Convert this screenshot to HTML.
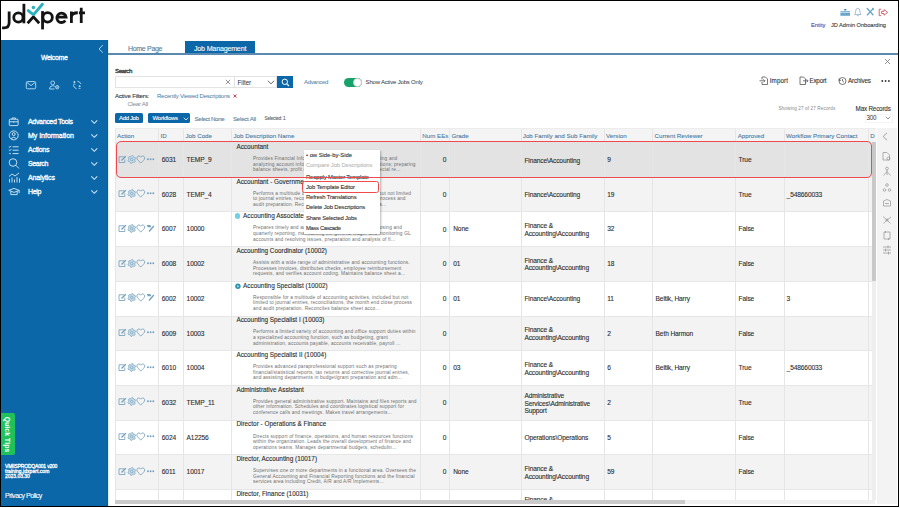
<!DOCTYPE html><html><head><meta charset="utf-8"><style>
*{margin:0;padding:0;box-sizing:border-box}
html,body{width:900px;height:508px;overflow:hidden;background:#fff}
body{position:relative;font-family:"Liberation Sans",sans-serif}
.t{position:absolute;white-space:nowrap}
.r{position:absolute}
.s{-webkit-text-stroke:0.1px currentColor}
.s2{-webkit-text-stroke:0.3px currentColor}
svg{position:absolute;overflow:visible}
</style></head><body>
<div class="r" style="left:0;top:0;width:899px;height:507px;border:1px solid #000;z-index:50"></div>
<svg style="left:0;top:0" width="90" height="40" viewBox="0 0 90 40">
<g fill="none" stroke="#141414" stroke-width="2.8" stroke-linecap="butt">
<path d="M9.15 11.4 V22.6 C9.15 26.6 7.4 27.9 4.2 27.9 H2.1"/>
<circle cx="18.4" cy="17.5" r="4.65"/>
<path d="M23.9 3.8 V23.3"/>
<path d="M27.6 23.2 L33.4 16.9 L39.2 23.2"/>
<circle cx="47.6" cy="17.3" r="4.75"/>
<path d="M42.55 11.1 V29.4"/>
<path d="M56.5 17.2 H66.1 A4.65 4.65 0 1 0 65.3 20.5"/>
<path d="M71.4 23.1 V11.4 M71.4 16.6 Q72 12.75 77.8 12.75"/>
<path d="M81.25 7.8 V23.1 M78.9 12.95 H85"/>
</g>
<path d="M28.3 10.6 Q30.5 12.6 33.6 14.6 L42.4 4.3" fill="none" stroke="#2db0bd" stroke-width="2.9" stroke-linecap="round" stroke-linejoin="round"/>
<circle cx="33.4" cy="7.6" r="1.75" fill="#2db0bd"/>
</svg>
<svg style="left:838px;top:7px" width="52" height="12" viewBox="0 0 52 12">
<rect x="6.1" y="1.9" width="2.3" height="1.6" rx="0.6" fill="#3f86b0"/>
<rect x="2.4" y="4.1" width="9.6" height="1" fill="#7db3d2"/>
<rect x="2.4" y="5.6" width="9.6" height="3.2" fill="#6aa7cb"/>
<path d="M16.6 7.6 Q17.6 6.6 17.6 4.6 Q17.6 1.2 19.8 1.2 Q22 1.2 22 4.6 Q22 6.6 23 7.6 Z M18.9 8.7 H20.7" fill="none" stroke="#86a9bd" stroke-width="0.75"/>
<path d="M29 1.3 L35.4 8.2 M35.6 1.3 L29 8.2" stroke="#6aa6c6" stroke-width="1.3"/>
<path d="M28.6 0.9 L30.6 2.9 M34 0.9 L36.2 2.9" stroke="#6aa6c6" stroke-width="0.9"/>
<path d="M43 2.2 H41.2 V8.6 H43" fill="none" stroke="#d4606a" stroke-width="0.95"/>
<path d="M43.6 4.3 H46 V2.6 L49.6 5.4 L46 8.2 V6.5 H43.6 Z" fill="none" stroke="#d4606a" stroke-width="0.95" stroke-linejoin="round"/>
</svg>
<div class="t s" style="left:811px;top:21.70px;font-size:5.7px;line-height:7.41px;color:#4a46a6;font-weight:normal;letter-spacing:0.029px;">Entity</div>
<div class="t s" style="left:831px;top:21.70px;font-size:5.7px;line-height:7.41px;color:#3a3a3a;font-weight:normal;letter-spacing:-0.038px;">JD Admin Onboarding</div>
<div class="r" style="left:1px;top:40px;width:107px;height:466px;background:#0b67a8;"></div>
<div class="r" style="left:107px;top:40px;width:1px;height:466px;background:#0b5d99;"></div>
<div class="r" style="left:108px;top:40px;width:1px;height:466px;background:#dff0f8;"></div>
<svg style="left:97px;top:44px" width="8" height="10" viewBox="0 0 8 10"><path d="M5.8 1.2 L2 4.9 L5.8 8.6" fill="none" stroke="#c3e2f6" stroke-width="0.9"/></svg>
<div class="t s2" style="left:41px;top:53.78px;font-size:6.8px;line-height:8.84px;color:#fff;font-weight:normal;letter-spacing:-0.256px;">Welcome</div>
<svg style="left:24px;top:79px" width="62" height="12" viewBox="0 0 62 12">
<g fill="none" stroke="#a8d4f0" stroke-width="1">
<rect x="2.3" y="2.6" width="9.4" height="7.2" rx="1"/>
<path d="M2.8 3.4 L7 6.6 L11.2 3.4"/>
<circle cx="28.7" cy="3.9" r="1.9"/>
<path d="M25.5 10 Q25.5 6.8 28.7 6.8 Q30 6.8 30.8 7.3 M25.5 10 H30.5"/>
<circle cx="33.2" cy="8.2" r="1.7"/><circle cx="33.2" cy="8.2" r="0.5"/>
<path d="M53.4 2.2 Q55.8 2.6 57 4.9 M49.3 6.3 Q49.9 8.9 52.6 9.8"/>
</g>
<g fill="#b8def5"><circle cx="50.4" cy="2.9" r="1"/><path d="M48.9 5.4 Q50.4 3.6 51.9 5.4 Z"/>
<circle cx="55.6" cy="7.3" r="1"/><path d="M54.1 9.8 Q55.6 8 57.1 9.8 Z"/></g>
</svg>
<div class="t s2" style="left:28px;top:117.45px;font-size:7px;line-height:9.1px;color:#fff;font-weight:normal;letter-spacing:-0.330px;">Advanced Tools</div>
<svg style="left:90px;top:119px" width="9" height="6" viewBox="0 0 9 6"><path d="M1.3 1.4 L4.3 4.3 L7.3 1.4" fill="none" stroke="#cfe6f5" stroke-width="1.05"/></svg>
<div class="t s2" style="left:28px;top:131.45px;font-size:7px;line-height:9.1px;color:#fff;font-weight:normal;letter-spacing:-0.030px;">My Information</div>
<svg style="left:90px;top:133px" width="9" height="6" viewBox="0 0 9 6"><path d="M1.3 1.4 L4.3 4.3 L7.3 1.4" fill="none" stroke="#cfe6f5" stroke-width="1.05"/></svg>
<div class="t s2" style="left:28px;top:145.45px;font-size:7px;line-height:9.1px;color:#fff;font-weight:normal;letter-spacing:-0.259px;">Actions</div>
<svg style="left:90px;top:147px" width="9" height="6" viewBox="0 0 9 6"><path d="M1.3 1.4 L4.3 4.3 L7.3 1.4" fill="none" stroke="#cfe6f5" stroke-width="1.05"/></svg>
<div class="t s2" style="left:28px;top:159.45px;font-size:7px;line-height:9.1px;color:#fff;font-weight:normal;letter-spacing:-0.356px;">Search</div>
<svg style="left:90px;top:161px" width="9" height="6" viewBox="0 0 9 6"><path d="M1.3 1.4 L4.3 4.3 L7.3 1.4" fill="none" stroke="#cfe6f5" stroke-width="1.05"/></svg>
<div class="t s2" style="left:28px;top:173.45px;font-size:7px;line-height:9.1px;color:#fff;font-weight:normal;letter-spacing:-0.139px;">Analytics</div>
<svg style="left:90px;top:175px" width="9" height="6" viewBox="0 0 9 6"><path d="M1.3 1.4 L4.3 4.3 L7.3 1.4" fill="none" stroke="#cfe6f5" stroke-width="1.05"/></svg>
<div class="t s2" style="left:28px;top:187.45px;font-size:7px;line-height:9.1px;color:#fff;font-weight:normal;letter-spacing:-0.332px;">Help</div>
<svg style="left:90px;top:189px" width="9" height="6" viewBox="0 0 9 6"><path d="M1.3 1.4 L4.3 4.3 L7.3 1.4" fill="none" stroke="#cfe6f5" stroke-width="1.05"/></svg>
<svg style="left:7px;top:114px" width="14" height="86" viewBox="0 0 14 86">
<g fill="none" stroke="#d8ecf8" stroke-width="0.9">
<rect x="2.3" y="5.2" width="8.8" height="6.4" rx="0.9"/><path d="M5 5.2 V4 H8.4 V5.2 M2.3 7.8 H11.1 M6.7 7.4 V8.6"/>
<circle cx="6.7" cy="21.4" r="4.5"/><circle cx="6.7" cy="20.1" r="1.5"/><path d="M3.9 24.6 Q6.7 21.8 9.5 24.6"/>
<path d="M1.8 32.6 L2.8 33.4 L4.2 31.9 M5.6 32.8 H11.6 M1.8 35.9 L2.8 36.7 L4.2 35.2 M5.6 36.2 H11.6 M2.2 39.6 H3.8 M5.6 39.6 H11.6"/>
<circle cx="6" cy="48.5" r="3.8"/><path d="M8.8 51.3 L12 54.5"/>
<path d="M2.5 68.5 V65 M5 68.5 V63.5 M7.5 68.5 V65.5 M10 68.5 V63 M12.5 68.5 V64.5 M2 62.5 L5 60 L8 62 L12 59"/>
<path d="M1.8 76.4 L7 74.4 L12.2 76.4 L7 78.4 Z M3.8 77.4 V80.6 H10.2 V77.4 M12.2 76.4 V79"/>
</g></svg>
<div class="r" style="left:1px;top:413.4px;width:13.8px;height:42px;background:#1fc25a;border-radius:0 2px 2px 0"></div>
<div class="t" style="left:-13.9px;top:429px;width:42px;height:11px;transform:rotate(90deg);font-size:6.9px;line-height:11px;color:#fff;font-weight:bold;text-align:center;letter-spacing:0.05px">Quick Tips</div>
<div class="t s2" style="left:5px;top:464.10px;font-size:5px;line-height:5px;color:#fff;font-weight:normal;letter-spacing:-0.192px;">VMIISPRODQA001 v200</div>
<div class="t s2" style="left:5px;top:469.10px;font-size:5px;line-height:5px;color:#fff;font-weight:normal;letter-spacing:0.035px;">training.jdxpert.com</div>
<div class="t s2" style="left:5px;top:474.10px;font-size:5px;line-height:5px;color:#fff;font-weight:normal;letter-spacing:-0.025px;">2023.03.30</div>
<div class="t s" style="left:5px;top:492.28px;font-size:7.1px;line-height:9.23px;color:#fff;font-weight:normal;letter-spacing:-0.522px;">Privacy Policy</div>
<div class="t s" style="left:128px;top:44.25px;font-size:7px;line-height:9.1px;color:#587a94;font-weight:normal;letter-spacing:-0.308px;">Home Page</div>
<div class="r" style="left:185px;top:41px;width:70px;height:12.5px;background:#0b67a8;"></div>
<div class="t s" style="left:194px;top:44.59px;font-size:7.1px;line-height:9.23px;color:#fff;font-weight:normal;letter-spacing:-0.189px;">Job Management</div>
<div class="r" style="left:108px;top:53px;width:790px;height:1.6px;background:#5a8ab0;"></div>
<svg style="left:884px;top:58px" width="7" height="7" viewBox="0 0 7 7"><path d="M1 1 L6 6 M6 1 L1 6" stroke="#777" stroke-width="0.8"/></svg>
<div class="t s2" style="left:115px;top:67.37px;font-size:6.2px;line-height:8.06px;color:#333;font-weight:normal;letter-spacing:-0.449px;">Search</div>
<div class="r" style="left:115px;top:76px;width:120px;height:12px;border:1px solid #e3e3e3;background:#fff"></div>
<svg style="left:225px;top:79px" width="6" height="6" viewBox="0 0 6 6"><path d="M0.8 0.8 L5.2 5.2 M5.2 0.8 L0.8 5.2" stroke="#666" stroke-width="0.7"/></svg>
<div class="r" style="left:234px;top:76px;width:43px;height:12px;border:1px solid #e3e3e3;background:#fff"></div>
<div class="t" style="left:237.5px;top:78.70px;font-size:6.3px;line-height:8.19px;color:#333;font-weight:normal;letter-spacing:-0.060px;">Filter</div>
<svg style="left:267px;top:80px" width="8" height="5" viewBox="0 0 8 5"><path d="M0.8 0.8 L4 3.8 L7.2 0.8" fill="none" stroke="#444" stroke-width="0.8"/></svg>
<div class="r" style="left:277px;top:76px;width:16px;height:12px;background:#0b67a8;"></div>
<svg style="left:281px;top:78px" width="9" height="9" viewBox="0 0 9 9"><circle cx="3.8" cy="3.8" r="2.7" fill="none" stroke="#fff" stroke-width="1"/><path d="M5.8 5.8 L8 8" stroke="#fff" stroke-width="1.1"/></svg>
<div class="t" style="left:304px;top:79.40px;font-size:6px;line-height:7.8px;color:#4a7aa3;font-weight:normal;letter-spacing:-0.341px;">Advanced</div>
<div class="r" style="left:343.5px;top:77.6px;width:18.6px;height:9.8px;background:#17a26b;border-radius:5px"></div>
<div class="r" style="left:352.5px;top:77.8px;width:9.4px;height:9.4px;border-radius:50%;background:#fff;border:0.6px solid #d0d0d0"></div>
<div class="t" style="left:365.6px;top:79.40px;font-size:6px;line-height:7.8px;color:#333;font-weight:normal;letter-spacing:-0.188px;">Show Active Jobs Only</div>
<svg style="left:758px;top:75px" width="92" height="11" viewBox="0 0 92 11">
<g fill="none" stroke="#555" stroke-width="0.8">
<path d="M4 2 H7.5 L9.5 4 V9.5 H4 V7 M4 4.5 V2"/><path d="M1.5 5.8 H7 M5.5 4.3 L7 5.8 L5.5 7.3"/>
<path d="M42 2 H45.5 L47.5 4 V9.5 H42 Z"/><path d="M45 5.8 H50 M48.6 4.3 L50 5.8 L48.6 7.3"/>
<circle cx="84.5" cy="6" r="3.5"/><path d="M84.5 4 V6 L86 7.2"/><path d="M81 3.5 L81 5.5 L83 5.2"/>
</g></svg>
<div class="t s" style="left:769.7px;top:77.11px;font-size:6.3px;line-height:8.19px;color:#333;font-weight:normal;letter-spacing:0.109px;">Import</div>
<div class="t s" style="left:809.4px;top:77.11px;font-size:6.3px;line-height:8.19px;color:#333;font-weight:normal;letter-spacing:-0.202px;">Export</div>
<div class="t s" style="left:848px;top:77.11px;font-size:6.3px;line-height:8.19px;color:#333;font-weight:normal;letter-spacing:-0.165px;">Archives</div>
<svg style="left:881px;top:79px" width="10" height="4" viewBox="0 0 10 4"><g fill="#333"><circle cx="1.3" cy="2" r="0.9"/><circle cx="4.6" cy="2" r="0.9"/><circle cx="7.9" cy="2" r="0.9"/></g></svg>
<div class="t s" style="left:115px;top:92.17px;font-size:6.2px;line-height:8.06px;color:#333;font-weight:normal;letter-spacing:-0.200px;">Active Filters:</div>
<div class="t" style="left:157px;top:92.70px;font-size:6px;line-height:7.8px;color:#4a7aa3;font-weight:normal;letter-spacing:-0.232px;">Recently Viewed Descriptions</div>
<svg style="left:232.6px;top:94px" width="4" height="4" viewBox="0 0 4 4"><path d="M0.5 0.5 L3.5 3.5 M3.5 0.5 L0.5 3.5" stroke="#d2343c" stroke-width="0.9"/></svg>
<div class="t" style="left:127.4px;top:99.83px;font-size:6.1px;line-height:7.93px;color:#8a8a8a;font-weight:normal;letter-spacing:-0.244px;">Clear All</div>
<div class="t" style="left:778.4px;top:105.61px;font-size:4.6px;line-height:5.98px;color:#888;font-weight:normal;letter-spacing:0.128px;">Showing 27 of 27 Records</div>
<div class="t s" style="left:855.6px;top:104.70px;font-size:6.3px;line-height:8.19px;color:#333;font-weight:normal;letter-spacing:-0.191px;">Max Records</div>
<div class="r" style="left:864.5px;top:113.5px;width:28px;height:9px;border:1px solid #f4f4f4;background:#fff"></div>
<div class="t" style="left:866.5px;top:113.91px;font-size:6.3px;line-height:8.19px;color:#333;font-weight:normal;letter-spacing:-0.306px;">300</div>
<svg style="left:885px;top:116px" width="6" height="4" viewBox="0 0 6 4"><path d="M0.7 0.7 L3 3 L5.3 0.7" fill="none" stroke="#666" stroke-width="0.7"/></svg>
<div class="r" style="left:115px;top:113px;width:28.3px;height:9.8px;background:#0b67a8;border-radius:1.5px"></div>
<div class="t s" style="left:119px;top:115.30px;font-size:6px;line-height:7.8px;color:#fff;font-weight:normal;letter-spacing:-0.353px;">Add Job</div>
<div class="r" style="left:148px;top:113px;width:42px;height:9.8px;background:#0b67a8;border-radius:1.5px"></div>
<div class="t s" style="left:152.5px;top:115.30px;font-size:6px;line-height:7.8px;color:#fff;font-weight:normal;letter-spacing:-0.246px;">Workflows</div>
<svg style="left:183px;top:117px" width="6" height="4" viewBox="0 0 6 4"><path d="M0.7 0.7 L3 3 L5.3 0.7" fill="none" stroke="#fff" stroke-width="0.8"/></svg>
<div class="t s" style="left:194.6px;top:114.87px;font-size:6.2px;line-height:8.06px;color:#61809a;font-weight:normal;letter-spacing:-0.358px;">Select None</div>
<div class="t s" style="left:233px;top:114.87px;font-size:6.2px;line-height:8.06px;color:#61809a;font-weight:normal;letter-spacing:-0.272px;">Select All</div>
<div class="t s" style="left:264.6px;top:116.34px;font-size:4.7px;line-height:6.11px;color:#666;font-weight:normal;letter-spacing:-0.232px;">Selected: 1</div>
<div class="r" style="left:115px;top:128px;width:760.5px;height:14px;background:#f4f4f4;"></div>
<div class="t s" style="left:117px;top:131.57px;font-size:6.2px;line-height:8.06px;color:#4c7ca5;font-weight:normal;">Action</div>
<div class="t s" style="left:160.5px;top:131.57px;font-size:6.2px;line-height:8.06px;color:#4c7ca5;font-weight:normal;">ID</div>
<div class="t s" style="left:185.5px;top:131.57px;font-size:6.2px;line-height:8.06px;color:#4c7ca5;font-weight:normal;">Job Code</div>
<div class="t s" style="left:233.5px;top:131.57px;font-size:6.2px;line-height:8.06px;color:#4c7ca5;font-weight:normal;">Job Description Name</div>
<div class="t s" style="left:422.3px;top:131.57px;font-size:6.2px;line-height:8.06px;color:#4c7ca5;font-weight:normal;">Num EEs</div>
<div class="t s" style="left:451.4px;top:131.57px;font-size:6.2px;line-height:8.06px;color:#4c7ca5;font-weight:normal;">Grade</div>
<div class="t s" style="left:522.8px;top:131.57px;font-size:6.2px;line-height:8.06px;color:#4c7ca5;font-weight:normal;">Job Family and Sub Family</div>
<div class="t s" style="left:606px;top:131.57px;font-size:6.2px;line-height:8.06px;color:#4c7ca5;font-weight:normal;">Version</div>
<div class="t s" style="left:654.5px;top:131.57px;font-size:6.2px;line-height:8.06px;color:#4c7ca5;font-weight:normal;">Current Reviewer</div>
<div class="t s" style="left:737.7px;top:131.57px;font-size:6.2px;line-height:8.06px;color:#4c7ca5;font-weight:normal;">Approved</div>
<div class="t s" style="left:786px;top:131.57px;font-size:6.2px;line-height:8.06px;color:#4c7ca5;font-weight:normal;">Workflow Primary Contact</div>
<div class="t s" style="left:870.3px;top:131.57px;font-size:6.2px;line-height:8.06px;color:#4c7ca5;font-weight:normal;">D</div>
<div class="r" style="left:115px;top:142.00px;width:760.5px;height:34.70px;background:#e3e3e3;"></div>
<div class="r" style="left:115px;top:176.70px;width:760.5px;height:34.70px;background:#f3f3f3;"></div>
<div class="r" style="left:115px;top:176.70px;width:760.5px;height:1px;background:#e6e6e6;"></div>
<div class="r" style="left:115px;top:211.40px;width:760.5px;height:34.70px;background:#fff;"></div>
<div class="r" style="left:115px;top:211.40px;width:760.5px;height:1px;background:#e6e6e6;"></div>
<div class="r" style="left:115px;top:246.10px;width:760.5px;height:34.70px;background:#f3f3f3;"></div>
<div class="r" style="left:115px;top:246.10px;width:760.5px;height:1px;background:#e6e6e6;"></div>
<div class="r" style="left:115px;top:280.80px;width:760.5px;height:34.70px;background:#fff;"></div>
<div class="r" style="left:115px;top:280.80px;width:760.5px;height:1px;background:#e6e6e6;"></div>
<div class="r" style="left:115px;top:315.50px;width:760.5px;height:34.70px;background:#f3f3f3;"></div>
<div class="r" style="left:115px;top:315.50px;width:760.5px;height:1px;background:#e6e6e6;"></div>
<div class="r" style="left:115px;top:350.20px;width:760.5px;height:34.70px;background:#fff;"></div>
<div class="r" style="left:115px;top:350.20px;width:760.5px;height:1px;background:#e6e6e6;"></div>
<div class="r" style="left:115px;top:384.90px;width:760.5px;height:34.70px;background:#f3f3f3;"></div>
<div class="r" style="left:115px;top:384.90px;width:760.5px;height:1px;background:#e6e6e6;"></div>
<div class="r" style="left:115px;top:419.60px;width:760.5px;height:34.70px;background:#fff;"></div>
<div class="r" style="left:115px;top:419.60px;width:760.5px;height:1px;background:#e6e6e6;"></div>
<div class="r" style="left:115px;top:454.30px;width:760.5px;height:34.70px;background:#f3f3f3;"></div>
<div class="r" style="left:115px;top:454.30px;width:760.5px;height:1px;background:#e6e6e6;"></div>
<div class="r" style="left:115px;top:489.00px;width:760.5px;height:11.00px;background:#fff;"></div>
<div class="r" style="left:115px;top:489.00px;width:760.5px;height:1px;background:#e6e6e6;"></div>
<div class="r" style="left:158px;top:128px;width:1px;height:372px;background:#e6e6e6;"></div>
<div class="r" style="left:183px;top:128px;width:1px;height:372px;background:#e6e6e6;"></div>
<div class="r" style="left:231px;top:128px;width:1px;height:372px;background:#e6e6e6;"></div>
<div class="r" style="left:420px;top:128px;width:1px;height:372px;background:#e6e6e6;"></div>
<div class="r" style="left:449px;top:128px;width:1px;height:372px;background:#e6e6e6;"></div>
<div class="r" style="left:521px;top:128px;width:1px;height:372px;background:#e6e6e6;"></div>
<div class="r" style="left:604px;top:128px;width:1px;height:372px;background:#e6e6e6;"></div>
<div class="r" style="left:652px;top:128px;width:1px;height:372px;background:#e6e6e6;"></div>
<div class="r" style="left:735px;top:128px;width:1px;height:372px;background:#e6e6e6;"></div>
<div class="r" style="left:784px;top:128px;width:1px;height:372px;background:#e6e6e6;"></div>
<div class="r" style="left:868px;top:128px;width:1px;height:372px;background:#e6e6e6;"></div>
<div class="r" style="left:115px;top:128px;width:1px;height:372px;background:#e6e6e6;"></div>
<div class="r" style="left:115px;top:128px;width:760.5px;height:1px;background:#ececec;"></div>
<svg style="left:118.3px;top:154.50px" width="38" height="9" viewBox="0 0 38 9"><g fill="none" stroke="#76a1bc" stroke-width="0.85"><path d="M6.5 1.8 H1 V7.5 H6.8 V4.5"/><path d="M3.5 5.5 L7.8 1.2" stroke-width="1.3"/><path d="M13.80 0.60 L14.81 0.73 L15.35 1.82 L15.99 2.31 L17.18 2.55 L17.57 3.49 L16.90 4.50 L16.79 5.30 L17.18 6.45 L16.56 7.26 L15.35 7.18 L14.60 7.49 L13.80 8.40 L12.79 8.27 L12.25 7.18 L11.61 6.69 L10.42 6.45 L10.03 5.51 L10.70 4.50 L10.81 3.70 L10.42 2.55 L11.04 1.74 L12.25 1.82 L13.00 1.51 Z" fill="#c9dde8" stroke-width="0.75" stroke-linejoin="round"/><circle cx="13.8" cy="4.5" r="1.3" stroke-width="0.7"/><path d="M22.8 7.9 C20.5 6 18.9 4.6 18.9 3 C18.9 1.8 19.8 1 20.9 1 C21.8 1 22.4 1.5 22.8 2.2 C23.2 1.5 23.8 1 24.7 1 C25.8 1 26.7 1.8 26.7 3 C26.7 4.6 25.1 6 22.8 7.9 Z"/></g><g fill="#76a1bc"><circle cx="29.9" cy="4.3" r="0.95"/><circle cx="32.6" cy="4.3" r="0.95"/><circle cx="35.3" cy="4.3" r="0.95"/></g></svg>
<div class="t s" style="left:161.8px;top:156.01px;font-size:6.6px;line-height:8.58px;color:#2b2b2b;font-weight:normal;letter-spacing:-0.12px;">6031</div>
<div class="t s" style="left:186.6px;top:156.01px;font-size:6.6px;line-height:8.58px;color:#2b2b2b;font-weight:normal;letter-spacing:-0.12px;">TEMP_9</div>
<div class="t s" style="left:236.4px;top:142.84px;font-size:6.4px;line-height:8.32px;color:#2b2b2b;font-weight:normal;">Accountant</div>
<div class="t" style="left:253px;top:155.90px;font-size:4.8px;line-height:5.6px;color:#6f6f6f;font-weight:normal;letter-spacing:0.159px;">Provides Financial Information by compiling and controlling and</div>
<div class="t" style="left:253px;top:161.50px;font-size:4.8px;line-height:5.6px;color:#6f6f6f;font-weight:normal;letter-spacing:0.159px;">analyzing account information and documenting transactions; preparing</div>
<div class="t" style="left:253px;top:167.10px;font-size:4.8px;line-height:5.6px;color:#6f6f6f;font-weight:normal;letter-spacing:0.159px;">balance sheets, profit and loss statements and other special re...</div>
<div class="t s" style="left:420px;width:26.4px;text-align:right;top:156.10px;font-size:6.6px;line-height:8.4px;color:#2b2b2b">0</div>
<div class="t s" style="left:524.4px;top:156.60px;font-size:6.6px;line-height:7.4px;color:#2b2b2b;font-weight:normal;letter-spacing:-0.12px;">Finance\Accounting</div>
<div class="t s" style="left:607.3px;top:156.01px;font-size:6.6px;line-height:8.58px;color:#2b2b2b;font-weight:normal;letter-spacing:-0.12px;">9</div>
<div class="t s" style="left:738.6px;top:156.01px;font-size:6.6px;line-height:8.58px;color:#2b2b2b;font-weight:normal;letter-spacing:-0.12px;">True</div>
<svg style="left:118.3px;top:189.20px" width="38" height="9" viewBox="0 0 38 9"><g fill="none" stroke="#76a1bc" stroke-width="0.85"><path d="M6.5 1.8 H1 V7.5 H6.8 V4.5"/><path d="M3.5 5.5 L7.8 1.2" stroke-width="1.3"/><path d="M13.80 0.60 L14.81 0.73 L15.35 1.82 L15.99 2.31 L17.18 2.55 L17.57 3.49 L16.90 4.50 L16.79 5.30 L17.18 6.45 L16.56 7.26 L15.35 7.18 L14.60 7.49 L13.80 8.40 L12.79 8.27 L12.25 7.18 L11.61 6.69 L10.42 6.45 L10.03 5.51 L10.70 4.50 L10.81 3.70 L10.42 2.55 L11.04 1.74 L12.25 1.82 L13.00 1.51 Z" fill="#c9dde8" stroke-width="0.75" stroke-linejoin="round"/><circle cx="13.8" cy="4.5" r="1.3" stroke-width="0.7"/><path d="M22.8 7.9 C20.5 6 18.9 4.6 18.9 3 C18.9 1.8 19.8 1 20.9 1 C21.8 1 22.4 1.5 22.8 2.2 C23.2 1.5 23.8 1 24.7 1 C25.8 1 26.7 1.8 26.7 3 C26.7 4.6 25.1 6 22.8 7.9 Z"/></g><g fill="#76a1bc"><circle cx="29.9" cy="4.3" r="0.95"/><circle cx="32.6" cy="4.3" r="0.95"/><circle cx="35.3" cy="4.3" r="0.95"/></g></svg>
<div class="t s" style="left:161.8px;top:190.71px;font-size:6.6px;line-height:8.58px;color:#2b2b2b;font-weight:normal;letter-spacing:-0.12px;">6028</div>
<div class="t s" style="left:186.6px;top:190.71px;font-size:6.6px;line-height:8.58px;color:#2b2b2b;font-weight:normal;letter-spacing:-0.12px;">TEMP_4</div>
<div class="t s" style="left:236.4px;top:177.54px;font-size:6.4px;line-height:8.32px;color:#2b2b2b;font-weight:normal;">Accountant - Government</div>
<div class="t" style="left:253px;top:190.60px;font-size:4.8px;line-height:5.6px;color:#6f6f6f;font-weight:normal;letter-spacing:0.159px;">Performs a multitude of accounting activities, including but not limited</div>
<div class="t" style="left:253px;top:196.20px;font-size:4.8px;line-height:5.6px;color:#6f6f6f;font-weight:normal;letter-spacing:0.159px;">to journal entries, reconciliations, the month end close process and</div>
<div class="t" style="left:253px;top:201.80px;font-size:4.8px;line-height:5.6px;color:#6f6f6f;font-weight:normal;letter-spacing:0.159px;">audit preparation.  Reconciles balance sheet accounts as...</div>
<div class="t s" style="left:420px;width:26.4px;text-align:right;top:190.80px;font-size:6.6px;line-height:8.4px;color:#2b2b2b">0</div>
<div class="t s" style="left:524.4px;top:191.30px;font-size:6.6px;line-height:7.4px;color:#2b2b2b;font-weight:normal;letter-spacing:-0.12px;">Finance\Accounting</div>
<div class="t s" style="left:607.3px;top:190.71px;font-size:6.6px;line-height:8.58px;color:#2b2b2b;font-weight:normal;letter-spacing:-0.12px;">19</div>
<div class="t s" style="left:738.6px;top:190.71px;font-size:6.6px;line-height:8.58px;color:#2b2b2b;font-weight:normal;letter-spacing:-0.12px;">True</div>
<div class="t s" style="left:786.6px;top:190.71px;font-size:6.6px;line-height:8.58px;color:#2b2b2b;font-weight:normal;letter-spacing:-0.12px;">_548660033</div>
<svg style="left:118.3px;top:223.90px" width="38" height="9" viewBox="0 0 38 9"><g fill="none" stroke="#76a1bc" stroke-width="0.85"><path d="M6.5 1.8 H1 V7.5 H6.8 V4.5"/><path d="M3.5 5.5 L7.8 1.2" stroke-width="1.3"/><path d="M13.80 0.60 L14.81 0.73 L15.35 1.82 L15.99 2.31 L17.18 2.55 L17.57 3.49 L16.90 4.50 L16.79 5.30 L17.18 6.45 L16.56 7.26 L15.35 7.18 L14.60 7.49 L13.80 8.40 L12.79 8.27 L12.25 7.18 L11.61 6.69 L10.42 6.45 L10.03 5.51 L10.70 4.50 L10.81 3.70 L10.42 2.55 L11.04 1.74 L12.25 1.82 L13.00 1.51 Z" fill="#c9dde8" stroke-width="0.75" stroke-linejoin="round"/><circle cx="13.8" cy="4.5" r="1.3" stroke-width="0.7"/><path d="M22.8 7.9 C20.5 6 18.9 4.6 18.9 3 C18.9 1.8 19.8 1 20.9 1 C21.8 1 22.4 1.5 22.8 2.2 C23.2 1.5 23.8 1 24.7 1 C25.8 1 26.7 1.8 26.7 3 C26.7 4.6 25.1 6 22.8 7.9 Z"/></g><g fill="none" stroke="#76a1bc" stroke-width="1.1"><path d="M29 1.5 H32.5 M29.5 2.6 H33"/><path d="M35.8 2 L31 7.5" stroke-width="1.3"/></g></svg>
<div class="t s" style="left:161.8px;top:225.41px;font-size:6.6px;line-height:8.58px;color:#2b2b2b;font-weight:normal;letter-spacing:-0.12px;">6007</div>
<div class="t s" style="left:186.6px;top:225.41px;font-size:6.6px;line-height:8.58px;color:#2b2b2b;font-weight:normal;letter-spacing:-0.12px;">10000</div>
<div class="r" style="left:234.7px;top:213.20px;width:5.8px;height:5.8px;border-radius:50%;background:#72cfe6"></div>
<div class="t s" style="left:243.1px;top:212.24px;font-size:6.4px;line-height:8.32px;color:#2b2b2b;font-weight:normal;">Accounting Associate</div>
<div class="t" style="left:253px;top:225.30px;font-size:4.8px;line-height:5.6px;color:#6f6f6f;font-weight:normal;letter-spacing:0.159px;">Prepares timely and accurate financial statements for closing and</div>
<div class="t" style="left:253px;top:230.90px;font-size:4.8px;line-height:5.6px;color:#6f6f6f;font-weight:normal;letter-spacing:0.159px;">quarterly reporting, maintaining the general ledger and monitoring GL</div>
<div class="t" style="left:253px;top:236.50px;font-size:4.8px;line-height:5.6px;color:#6f6f6f;font-weight:normal;letter-spacing:0.159px;">accounts and resolving issues, preparation and analysis of fi...</div>
<div class="t s" style="left:420px;width:26.4px;text-align:right;top:225.50px;font-size:6.6px;line-height:8.4px;color:#2b2b2b">0</div>
<div class="t s" style="left:453.2px;top:225.41px;font-size:6.6px;line-height:8.58px;color:#2b2b2b;font-weight:normal;letter-spacing:-0.12px;">None</div>
<div class="t s" style="left:524.4px;top:222.30px;font-size:6.6px;line-height:7.4px;color:#2b2b2b;font-weight:normal;letter-spacing:-0.12px;">Finance &</div>
<div class="t s" style="left:524.4px;top:229.70px;font-size:6.6px;line-height:7.4px;color:#2b2b2b;font-weight:normal;letter-spacing:-0.12px;">Accounting\Accounting</div>
<div class="t s" style="left:607.3px;top:225.41px;font-size:6.6px;line-height:8.58px;color:#2b2b2b;font-weight:normal;letter-spacing:-0.12px;">32</div>
<div class="t s" style="left:738.6px;top:225.41px;font-size:6.6px;line-height:8.58px;color:#2b2b2b;font-weight:normal;letter-spacing:-0.12px;">False</div>
<svg style="left:118.3px;top:258.60px" width="38" height="9" viewBox="0 0 38 9"><g fill="none" stroke="#76a1bc" stroke-width="0.85"><path d="M6.5 1.8 H1 V7.5 H6.8 V4.5"/><path d="M3.5 5.5 L7.8 1.2" stroke-width="1.3"/><path d="M13.80 0.60 L14.81 0.73 L15.35 1.82 L15.99 2.31 L17.18 2.55 L17.57 3.49 L16.90 4.50 L16.79 5.30 L17.18 6.45 L16.56 7.26 L15.35 7.18 L14.60 7.49 L13.80 8.40 L12.79 8.27 L12.25 7.18 L11.61 6.69 L10.42 6.45 L10.03 5.51 L10.70 4.50 L10.81 3.70 L10.42 2.55 L11.04 1.74 L12.25 1.82 L13.00 1.51 Z" fill="#c9dde8" stroke-width="0.75" stroke-linejoin="round"/><circle cx="13.8" cy="4.5" r="1.3" stroke-width="0.7"/><path d="M22.8 7.9 C20.5 6 18.9 4.6 18.9 3 C18.9 1.8 19.8 1 20.9 1 C21.8 1 22.4 1.5 22.8 2.2 C23.2 1.5 23.8 1 24.7 1 C25.8 1 26.7 1.8 26.7 3 C26.7 4.6 25.1 6 22.8 7.9 Z"/></g><g fill="#76a1bc"><circle cx="29.9" cy="4.3" r="0.95"/><circle cx="32.6" cy="4.3" r="0.95"/><circle cx="35.3" cy="4.3" r="0.95"/></g></svg>
<div class="t s" style="left:161.8px;top:260.11px;font-size:6.6px;line-height:8.58px;color:#2b2b2b;font-weight:normal;letter-spacing:-0.12px;">6008</div>
<div class="t s" style="left:186.6px;top:260.11px;font-size:6.6px;line-height:8.58px;color:#2b2b2b;font-weight:normal;letter-spacing:-0.12px;">10002</div>
<div class="t s" style="left:236.4px;top:246.94px;font-size:6.4px;line-height:8.32px;color:#2b2b2b;font-weight:normal;">Accounting Coordinator (10002)</div>
<div class="t" style="left:253px;top:260.00px;font-size:4.8px;line-height:5.6px;color:#6f6f6f;font-weight:normal;letter-spacing:0.159px;">Assists with a wide range of administrative and accounting functions.</div>
<div class="t" style="left:253px;top:265.60px;font-size:4.8px;line-height:5.6px;color:#6f6f6f;font-weight:normal;letter-spacing:0.159px;">Processes invoices, distributes checks, employee reimbursement</div>
<div class="t" style="left:253px;top:271.20px;font-size:4.8px;line-height:5.6px;color:#6f6f6f;font-weight:normal;letter-spacing:0.159px;">requests, and verifies account coding. Maintains balance sheet a...</div>
<div class="t s" style="left:420px;width:26.4px;text-align:right;top:260.20px;font-size:6.6px;line-height:8.4px;color:#2b2b2b">0</div>
<div class="t s" style="left:453.2px;top:260.11px;font-size:6.6px;line-height:8.58px;color:#2b2b2b;font-weight:normal;letter-spacing:-0.12px;">01</div>
<div class="t s" style="left:524.4px;top:257.00px;font-size:6.6px;line-height:7.4px;color:#2b2b2b;font-weight:normal;letter-spacing:-0.12px;">Finance &</div>
<div class="t s" style="left:524.4px;top:264.40px;font-size:6.6px;line-height:7.4px;color:#2b2b2b;font-weight:normal;letter-spacing:-0.12px;">Accounting\Accounting</div>
<div class="t s" style="left:607.3px;top:260.11px;font-size:6.6px;line-height:8.58px;color:#2b2b2b;font-weight:normal;letter-spacing:-0.12px;">18</div>
<div class="t s" style="left:738.6px;top:260.11px;font-size:6.6px;line-height:8.58px;color:#2b2b2b;font-weight:normal;letter-spacing:-0.12px;">False</div>
<svg style="left:118.3px;top:293.30px" width="38" height="9" viewBox="0 0 38 9"><g fill="none" stroke="#76a1bc" stroke-width="0.85"><path d="M6.5 1.8 H1 V7.5 H6.8 V4.5"/><path d="M3.5 5.5 L7.8 1.2" stroke-width="1.3"/><path d="M13.80 0.60 L14.81 0.73 L15.35 1.82 L15.99 2.31 L17.18 2.55 L17.57 3.49 L16.90 4.50 L16.79 5.30 L17.18 6.45 L16.56 7.26 L15.35 7.18 L14.60 7.49 L13.80 8.40 L12.79 8.27 L12.25 7.18 L11.61 6.69 L10.42 6.45 L10.03 5.51 L10.70 4.50 L10.81 3.70 L10.42 2.55 L11.04 1.74 L12.25 1.82 L13.00 1.51 Z" fill="#c9dde8" stroke-width="0.75" stroke-linejoin="round"/><circle cx="13.8" cy="4.5" r="1.3" stroke-width="0.7"/><path d="M22.8 7.9 C20.5 6 18.9 4.6 18.9 3 C18.9 1.8 19.8 1 20.9 1 C21.8 1 22.4 1.5 22.8 2.2 C23.2 1.5 23.8 1 24.7 1 C25.8 1 26.7 1.8 26.7 3 C26.7 4.6 25.1 6 22.8 7.9 Z"/></g><g fill="none" stroke="#76a1bc" stroke-width="1.1"><path d="M29 1.5 H32.5 M29.5 2.6 H33"/><path d="M35.8 2 L31 7.5" stroke-width="1.3"/></g></svg>
<div class="t s" style="left:161.8px;top:294.81px;font-size:6.6px;line-height:8.58px;color:#2b2b2b;font-weight:normal;letter-spacing:-0.12px;">6002</div>
<div class="t s" style="left:186.6px;top:294.81px;font-size:6.6px;line-height:8.58px;color:#2b2b2b;font-weight:normal;letter-spacing:-0.12px;">10002</div>
<svg style="left:234.6px;top:282.70px" width="6" height="6" viewBox="0 0 6 6"><circle cx="2.9" cy="3.2" r="2.7" fill="#2f95ae"/><path d="M2.2 1.9 L4.3 3.2 L2.2 4.5 Z" fill="#a8e6f4"/></svg>
<div class="t s" style="left:243.1px;top:281.64px;font-size:6.4px;line-height:8.32px;color:#2b2b2b;font-weight:normal;">Accounting Specialist (10002)</div>
<div class="t" style="left:253px;top:294.70px;font-size:4.8px;line-height:5.6px;color:#6f6f6f;font-weight:normal;letter-spacing:0.159px;">Responsible for a multitude of accounting activities, included but not</div>
<div class="t" style="left:253px;top:300.30px;font-size:4.8px;line-height:5.6px;color:#6f6f6f;font-weight:normal;letter-spacing:0.159px;">limited to journal entries, reconciliations, the month end close process</div>
<div class="t" style="left:253px;top:305.90px;font-size:4.8px;line-height:5.6px;color:#6f6f6f;font-weight:normal;letter-spacing:0.159px;">and audit preparation.  Reconciles balance sheet acco...</div>
<div class="t s" style="left:420px;width:26.4px;text-align:right;top:294.90px;font-size:6.6px;line-height:8.4px;color:#2b2b2b">0</div>
<div class="t s" style="left:453.2px;top:294.81px;font-size:6.6px;line-height:8.58px;color:#2b2b2b;font-weight:normal;letter-spacing:-0.12px;">01</div>
<div class="t s" style="left:524.4px;top:295.40px;font-size:6.6px;line-height:7.4px;color:#2b2b2b;font-weight:normal;letter-spacing:-0.12px;">Finance\Accounting</div>
<div class="t s" style="left:607.3px;top:294.81px;font-size:6.6px;line-height:8.58px;color:#2b2b2b;font-weight:normal;letter-spacing:-0.12px;">11</div>
<div class="t s" style="left:655.6px;top:294.81px;font-size:6.6px;line-height:8.58px;color:#2b2b2b;font-weight:normal;letter-spacing:-0.12px;">Beltik, Harry</div>
<div class="t s" style="left:738.6px;top:294.81px;font-size:6.6px;line-height:8.58px;color:#2b2b2b;font-weight:normal;letter-spacing:-0.12px;">False</div>
<div class="t s" style="left:786.6px;top:294.81px;font-size:6.6px;line-height:8.58px;color:#2b2b2b;font-weight:normal;letter-spacing:-0.12px;">3</div>
<svg style="left:118.3px;top:328.00px" width="38" height="9" viewBox="0 0 38 9"><g fill="none" stroke="#76a1bc" stroke-width="0.85"><path d="M6.5 1.8 H1 V7.5 H6.8 V4.5"/><path d="M3.5 5.5 L7.8 1.2" stroke-width="1.3"/><path d="M13.80 0.60 L14.81 0.73 L15.35 1.82 L15.99 2.31 L17.18 2.55 L17.57 3.49 L16.90 4.50 L16.79 5.30 L17.18 6.45 L16.56 7.26 L15.35 7.18 L14.60 7.49 L13.80 8.40 L12.79 8.27 L12.25 7.18 L11.61 6.69 L10.42 6.45 L10.03 5.51 L10.70 4.50 L10.81 3.70 L10.42 2.55 L11.04 1.74 L12.25 1.82 L13.00 1.51 Z" fill="#c9dde8" stroke-width="0.75" stroke-linejoin="round"/><circle cx="13.8" cy="4.5" r="1.3" stroke-width="0.7"/><path d="M22.8 7.9 C20.5 6 18.9 4.6 18.9 3 C18.9 1.8 19.8 1 20.9 1 C21.8 1 22.4 1.5 22.8 2.2 C23.2 1.5 23.8 1 24.7 1 C25.8 1 26.7 1.8 26.7 3 C26.7 4.6 25.1 6 22.8 7.9 Z"/></g><g fill="#76a1bc"><circle cx="29.9" cy="4.3" r="0.95"/><circle cx="32.6" cy="4.3" r="0.95"/><circle cx="35.3" cy="4.3" r="0.95"/></g></svg>
<div class="t s" style="left:161.8px;top:329.51px;font-size:6.6px;line-height:8.58px;color:#2b2b2b;font-weight:normal;letter-spacing:-0.12px;">6009</div>
<div class="t s" style="left:186.6px;top:329.51px;font-size:6.6px;line-height:8.58px;color:#2b2b2b;font-weight:normal;letter-spacing:-0.12px;">10003</div>
<div class="t s" style="left:236.4px;top:316.34px;font-size:6.4px;line-height:8.32px;color:#2b2b2b;font-weight:normal;">Accounting Specialist I (10003)</div>
<div class="t" style="left:253px;top:329.40px;font-size:4.8px;line-height:5.6px;color:#6f6f6f;font-weight:normal;letter-spacing:0.159px;">Performs a limited variety of accounting and office support duties within</div>
<div class="t" style="left:253px;top:335.00px;font-size:4.8px;line-height:5.6px;color:#6f6f6f;font-weight:normal;letter-spacing:0.159px;">a specialized accounting function, such as budgeting, grant</div>
<div class="t" style="left:253px;top:340.60px;font-size:4.8px;line-height:5.6px;color:#6f6f6f;font-weight:normal;letter-spacing:0.159px;">administration, accounts payable, accounts receivable, payroll ...</div>
<div class="t s" style="left:420px;width:26.4px;text-align:right;top:329.60px;font-size:6.6px;line-height:8.4px;color:#2b2b2b">0</div>
<div class="t s" style="left:524.4px;top:326.40px;font-size:6.6px;line-height:7.4px;color:#2b2b2b;font-weight:normal;letter-spacing:-0.12px;">Finance &</div>
<div class="t s" style="left:524.4px;top:333.80px;font-size:6.6px;line-height:7.4px;color:#2b2b2b;font-weight:normal;letter-spacing:-0.12px;">Accounting\Accounting</div>
<div class="t s" style="left:607.3px;top:329.51px;font-size:6.6px;line-height:8.58px;color:#2b2b2b;font-weight:normal;letter-spacing:-0.12px;">2</div>
<div class="t s" style="left:655.6px;top:329.51px;font-size:6.6px;line-height:8.58px;color:#2b2b2b;font-weight:normal;letter-spacing:-0.12px;">Beth Harmon</div>
<div class="t s" style="left:738.6px;top:329.51px;font-size:6.6px;line-height:8.58px;color:#2b2b2b;font-weight:normal;letter-spacing:-0.12px;">False</div>
<svg style="left:118.3px;top:362.70px" width="38" height="9" viewBox="0 0 38 9"><g fill="none" stroke="#76a1bc" stroke-width="0.85"><path d="M6.5 1.8 H1 V7.5 H6.8 V4.5"/><path d="M3.5 5.5 L7.8 1.2" stroke-width="1.3"/><path d="M13.80 0.60 L14.81 0.73 L15.35 1.82 L15.99 2.31 L17.18 2.55 L17.57 3.49 L16.90 4.50 L16.79 5.30 L17.18 6.45 L16.56 7.26 L15.35 7.18 L14.60 7.49 L13.80 8.40 L12.79 8.27 L12.25 7.18 L11.61 6.69 L10.42 6.45 L10.03 5.51 L10.70 4.50 L10.81 3.70 L10.42 2.55 L11.04 1.74 L12.25 1.82 L13.00 1.51 Z" fill="#c9dde8" stroke-width="0.75" stroke-linejoin="round"/><circle cx="13.8" cy="4.5" r="1.3" stroke-width="0.7"/><path d="M22.8 7.9 C20.5 6 18.9 4.6 18.9 3 C18.9 1.8 19.8 1 20.9 1 C21.8 1 22.4 1.5 22.8 2.2 C23.2 1.5 23.8 1 24.7 1 C25.8 1 26.7 1.8 26.7 3 C26.7 4.6 25.1 6 22.8 7.9 Z"/></g><g fill="#76a1bc"><circle cx="29.9" cy="4.3" r="0.95"/><circle cx="32.6" cy="4.3" r="0.95"/><circle cx="35.3" cy="4.3" r="0.95"/></g></svg>
<div class="t s" style="left:161.8px;top:364.21px;font-size:6.6px;line-height:8.58px;color:#2b2b2b;font-weight:normal;letter-spacing:-0.12px;">6010</div>
<div class="t s" style="left:186.6px;top:364.21px;font-size:6.6px;line-height:8.58px;color:#2b2b2b;font-weight:normal;letter-spacing:-0.12px;">10004</div>
<div class="t s" style="left:236.4px;top:351.04px;font-size:6.4px;line-height:8.32px;color:#2b2b2b;font-weight:normal;">Accounting Specialist II (10004)</div>
<div class="t" style="left:253px;top:364.10px;font-size:4.8px;line-height:5.6px;color:#6f6f6f;font-weight:normal;letter-spacing:0.159px;">Provides advanced paraprofessional support such as preparing</div>
<div class="t" style="left:253px;top:369.70px;font-size:4.8px;line-height:5.6px;color:#6f6f6f;font-weight:normal;letter-spacing:0.159px;">financial/statistical reports, tax returns and corrective journal entries,</div>
<div class="t" style="left:253px;top:375.30px;font-size:4.8px;line-height:5.6px;color:#6f6f6f;font-weight:normal;letter-spacing:0.159px;">and assisting departments in budget/grant preparation and adm...</div>
<div class="t s" style="left:420px;width:26.4px;text-align:right;top:364.30px;font-size:6.6px;line-height:8.4px;color:#2b2b2b">0</div>
<div class="t s" style="left:453.2px;top:364.21px;font-size:6.6px;line-height:8.58px;color:#2b2b2b;font-weight:normal;letter-spacing:-0.12px;">03</div>
<div class="t s" style="left:524.4px;top:361.10px;font-size:6.6px;line-height:7.4px;color:#2b2b2b;font-weight:normal;letter-spacing:-0.12px;">Finance &</div>
<div class="t s" style="left:524.4px;top:368.50px;font-size:6.6px;line-height:7.4px;color:#2b2b2b;font-weight:normal;letter-spacing:-0.12px;">Accounting\Accounting</div>
<div class="t s" style="left:607.3px;top:364.21px;font-size:6.6px;line-height:8.58px;color:#2b2b2b;font-weight:normal;letter-spacing:-0.12px;">6</div>
<div class="t s" style="left:655.6px;top:364.21px;font-size:6.6px;line-height:8.58px;color:#2b2b2b;font-weight:normal;letter-spacing:-0.12px;">Beltik, Harry</div>
<div class="t s" style="left:738.6px;top:364.21px;font-size:6.6px;line-height:8.58px;color:#2b2b2b;font-weight:normal;letter-spacing:-0.12px;">True</div>
<div class="t s" style="left:786.6px;top:364.21px;font-size:6.6px;line-height:8.58px;color:#2b2b2b;font-weight:normal;letter-spacing:-0.12px;">_548660033</div>
<svg style="left:118.3px;top:397.40px" width="38" height="9" viewBox="0 0 38 9"><g fill="none" stroke="#76a1bc" stroke-width="0.85"><path d="M6.5 1.8 H1 V7.5 H6.8 V4.5"/><path d="M3.5 5.5 L7.8 1.2" stroke-width="1.3"/><path d="M13.80 0.60 L14.81 0.73 L15.35 1.82 L15.99 2.31 L17.18 2.55 L17.57 3.49 L16.90 4.50 L16.79 5.30 L17.18 6.45 L16.56 7.26 L15.35 7.18 L14.60 7.49 L13.80 8.40 L12.79 8.27 L12.25 7.18 L11.61 6.69 L10.42 6.45 L10.03 5.51 L10.70 4.50 L10.81 3.70 L10.42 2.55 L11.04 1.74 L12.25 1.82 L13.00 1.51 Z" fill="#c9dde8" stroke-width="0.75" stroke-linejoin="round"/><circle cx="13.8" cy="4.5" r="1.3" stroke-width="0.7"/><path d="M22.8 7.9 C20.5 6 18.9 4.6 18.9 3 C18.9 1.8 19.8 1 20.9 1 C21.8 1 22.4 1.5 22.8 2.2 C23.2 1.5 23.8 1 24.7 1 C25.8 1 26.7 1.8 26.7 3 C26.7 4.6 25.1 6 22.8 7.9 Z"/></g><g fill="#76a1bc"><circle cx="29.9" cy="4.3" r="0.95"/><circle cx="32.6" cy="4.3" r="0.95"/><circle cx="35.3" cy="4.3" r="0.95"/></g></svg>
<div class="t s" style="left:161.8px;top:398.91px;font-size:6.6px;line-height:8.58px;color:#2b2b2b;font-weight:normal;letter-spacing:-0.12px;">6032</div>
<div class="t s" style="left:186.6px;top:398.91px;font-size:6.6px;line-height:8.58px;color:#2b2b2b;font-weight:normal;letter-spacing:-0.12px;">TEMP_11</div>
<div class="t s" style="left:236.4px;top:385.74px;font-size:6.4px;line-height:8.32px;color:#2b2b2b;font-weight:normal;">Administrative Assistant</div>
<div class="t" style="left:253px;top:398.80px;font-size:4.8px;line-height:5.6px;color:#6f6f6f;font-weight:normal;letter-spacing:0.159px;">Provides general administrative support. Maintains and files reports and</div>
<div class="t" style="left:253px;top:404.40px;font-size:4.8px;line-height:5.6px;color:#6f6f6f;font-weight:normal;letter-spacing:0.159px;">other information. Schedules and coordinates logistical support for</div>
<div class="t" style="left:253px;top:410.00px;font-size:4.8px;line-height:5.6px;color:#6f6f6f;font-weight:normal;letter-spacing:0.159px;">conference calls and meetings. Makes travel arrangements...</div>
<div class="t s" style="left:420px;width:26.4px;text-align:right;top:399.00px;font-size:6.6px;line-height:8.4px;color:#2b2b2b">0</div>
<div class="t s" style="left:524.4px;top:392.10px;font-size:6.6px;line-height:7.4px;color:#2b2b2b;font-weight:normal;letter-spacing:-0.12px;">Administrative</div>
<div class="t s" style="left:524.4px;top:399.50px;font-size:6.6px;line-height:7.4px;color:#2b2b2b;font-weight:normal;letter-spacing:-0.12px;">Services\Administrative</div>
<div class="t s" style="left:524.4px;top:406.90px;font-size:6.6px;line-height:7.4px;color:#2b2b2b;font-weight:normal;letter-spacing:-0.12px;">Support</div>
<div class="t s" style="left:607.3px;top:398.91px;font-size:6.6px;line-height:8.58px;color:#2b2b2b;font-weight:normal;letter-spacing:-0.12px;">2</div>
<div class="t s" style="left:738.6px;top:398.91px;font-size:6.6px;line-height:8.58px;color:#2b2b2b;font-weight:normal;letter-spacing:-0.12px;">True</div>
<svg style="left:118.3px;top:432.10px" width="38" height="9" viewBox="0 0 38 9"><g fill="none" stroke="#76a1bc" stroke-width="0.85"><path d="M6.5 1.8 H1 V7.5 H6.8 V4.5"/><path d="M3.5 5.5 L7.8 1.2" stroke-width="1.3"/><path d="M13.80 0.60 L14.81 0.73 L15.35 1.82 L15.99 2.31 L17.18 2.55 L17.57 3.49 L16.90 4.50 L16.79 5.30 L17.18 6.45 L16.56 7.26 L15.35 7.18 L14.60 7.49 L13.80 8.40 L12.79 8.27 L12.25 7.18 L11.61 6.69 L10.42 6.45 L10.03 5.51 L10.70 4.50 L10.81 3.70 L10.42 2.55 L11.04 1.74 L12.25 1.82 L13.00 1.51 Z" fill="#c9dde8" stroke-width="0.75" stroke-linejoin="round"/><circle cx="13.8" cy="4.5" r="1.3" stroke-width="0.7"/><path d="M22.8 7.9 C20.5 6 18.9 4.6 18.9 3 C18.9 1.8 19.8 1 20.9 1 C21.8 1 22.4 1.5 22.8 2.2 C23.2 1.5 23.8 1 24.7 1 C25.8 1 26.7 1.8 26.7 3 C26.7 4.6 25.1 6 22.8 7.9 Z"/></g><g fill="#76a1bc"><circle cx="29.9" cy="4.3" r="0.95"/><circle cx="32.6" cy="4.3" r="0.95"/><circle cx="35.3" cy="4.3" r="0.95"/></g></svg>
<div class="t s" style="left:161.8px;top:433.61px;font-size:6.6px;line-height:8.58px;color:#2b2b2b;font-weight:normal;letter-spacing:-0.12px;">6024</div>
<div class="t s" style="left:186.6px;top:433.61px;font-size:6.6px;line-height:8.58px;color:#2b2b2b;font-weight:normal;letter-spacing:-0.12px;">A12256</div>
<div class="t s" style="left:236.4px;top:420.44px;font-size:6.4px;line-height:8.32px;color:#2b2b2b;font-weight:normal;">Director - Operations &amp; Finance</div>
<div class="t" style="left:253px;top:433.50px;font-size:4.8px;line-height:5.6px;color:#6f6f6f;font-weight:normal;letter-spacing:0.159px;">Directs support of finance, operations, and human resources functions</div>
<div class="t" style="left:253px;top:439.10px;font-size:4.8px;line-height:5.6px;color:#6f6f6f;font-weight:normal;letter-spacing:0.159px;">within the organization. Leads the overall development of finance and</div>
<div class="t" style="left:253px;top:444.70px;font-size:4.8px;line-height:5.6px;color:#6f6f6f;font-weight:normal;letter-spacing:0.159px;">operations teams. Manages departmental budgets, schedulin...</div>
<div class="t s" style="left:420px;width:26.4px;text-align:right;top:433.70px;font-size:6.6px;line-height:8.4px;color:#2b2b2b">0</div>
<div class="t s" style="left:524.4px;top:434.20px;font-size:6.6px;line-height:7.4px;color:#2b2b2b;font-weight:normal;letter-spacing:-0.12px;">Operations\Operations</div>
<div class="t s" style="left:607.3px;top:433.61px;font-size:6.6px;line-height:8.58px;color:#2b2b2b;font-weight:normal;letter-spacing:-0.12px;">5</div>
<div class="t s" style="left:738.6px;top:433.61px;font-size:6.6px;line-height:8.58px;color:#2b2b2b;font-weight:normal;letter-spacing:-0.12px;">False</div>
<svg style="left:118.3px;top:466.80px" width="38" height="9" viewBox="0 0 38 9"><g fill="none" stroke="#76a1bc" stroke-width="0.85"><path d="M6.5 1.8 H1 V7.5 H6.8 V4.5"/><path d="M3.5 5.5 L7.8 1.2" stroke-width="1.3"/><path d="M13.80 0.60 L14.81 0.73 L15.35 1.82 L15.99 2.31 L17.18 2.55 L17.57 3.49 L16.90 4.50 L16.79 5.30 L17.18 6.45 L16.56 7.26 L15.35 7.18 L14.60 7.49 L13.80 8.40 L12.79 8.27 L12.25 7.18 L11.61 6.69 L10.42 6.45 L10.03 5.51 L10.70 4.50 L10.81 3.70 L10.42 2.55 L11.04 1.74 L12.25 1.82 L13.00 1.51 Z" fill="#c9dde8" stroke-width="0.75" stroke-linejoin="round"/><circle cx="13.8" cy="4.5" r="1.3" stroke-width="0.7"/><path d="M22.8 7.9 C20.5 6 18.9 4.6 18.9 3 C18.9 1.8 19.8 1 20.9 1 C21.8 1 22.4 1.5 22.8 2.2 C23.2 1.5 23.8 1 24.7 1 C25.8 1 26.7 1.8 26.7 3 C26.7 4.6 25.1 6 22.8 7.9 Z"/></g><g fill="#76a1bc"><circle cx="29.9" cy="4.3" r="0.95"/><circle cx="32.6" cy="4.3" r="0.95"/><circle cx="35.3" cy="4.3" r="0.95"/></g></svg>
<div class="t s" style="left:161.8px;top:468.31px;font-size:6.6px;line-height:8.58px;color:#2b2b2b;font-weight:normal;letter-spacing:-0.12px;">6011</div>
<div class="t s" style="left:186.6px;top:468.31px;font-size:6.6px;line-height:8.58px;color:#2b2b2b;font-weight:normal;letter-spacing:-0.12px;">10017</div>
<div class="t s" style="left:236.4px;top:455.14px;font-size:6.4px;line-height:8.32px;color:#2b2b2b;font-weight:normal;">Director, Accounting (10017)</div>
<div class="t" style="left:253px;top:468.20px;font-size:4.8px;line-height:5.6px;color:#6f6f6f;font-weight:normal;letter-spacing:0.159px;">Supervises one or more departments in a functional area.  Oversees the</div>
<div class="t" style="left:253px;top:473.80px;font-size:4.8px;line-height:5.6px;color:#6f6f6f;font-weight:normal;letter-spacing:0.159px;">General Accounting and Financial Reporting functions and the financial</div>
<div class="t" style="left:253px;top:479.40px;font-size:4.8px;line-height:5.6px;color:#6f6f6f;font-weight:normal;letter-spacing:0.159px;">services area including Credit, A/R and A/R Implements...</div>
<div class="t s" style="left:420px;width:26.4px;text-align:right;top:468.40px;font-size:6.6px;line-height:8.4px;color:#2b2b2b">0</div>
<div class="t s" style="left:453.2px;top:468.31px;font-size:6.6px;line-height:8.58px;color:#2b2b2b;font-weight:normal;letter-spacing:-0.12px;">None</div>
<div class="t s" style="left:524.4px;top:465.20px;font-size:6.6px;line-height:7.4px;color:#2b2b2b;font-weight:normal;letter-spacing:-0.12px;">Finance &</div>
<div class="t s" style="left:524.4px;top:472.60px;font-size:6.6px;line-height:7.4px;color:#2b2b2b;font-weight:normal;letter-spacing:-0.12px;">Accounting\Accounting</div>
<div class="t s" style="left:607.3px;top:468.31px;font-size:6.6px;line-height:8.58px;color:#2b2b2b;font-weight:normal;letter-spacing:-0.12px;">59</div>
<div class="t s" style="left:738.6px;top:468.31px;font-size:6.6px;line-height:8.58px;color:#2b2b2b;font-weight:normal;letter-spacing:-0.12px;">False</div>
<div class="t s" style="left:236.4px;top:489.84px;font-size:6.4px;line-height:8.32px;color:#2b2b2b;font-weight:normal;">Director, Finance (10031)</div>
<div class="t s" style="left:524.4px;top:496.20px;font-size:6.6px;line-height:7.4px;color:#2b2b2b;font-weight:normal;letter-spacing:-0.12px;">Finance &</div>
<div class="t s" style="left:524.4px;top:503.60px;font-size:6.6px;line-height:7.4px;color:#2b2b2b;font-weight:normal;letter-spacing:-0.12px;">Accounting\Accounting</div>
<div class="t s" style="left:524.4px;top:511.00px;font-size:6.6px;line-height:7.4px;color:#2b2b2b;font-weight:normal;letter-spacing:-0.12px;">Planning</div>
<div class="r" style="left:872px;top:142px;width:3.5px;height:358px;background:#eeeeee;"></div>
<div class="r" style="left:872px;top:142px;width:3.5px;height:139px;background:#c9c9c9;"></div>
<div class="r" style="left:109px;top:500px;width:768px;height:8px;background:#fff;z-index:5"></div>
<div class="r" style="left:877px;top:504px;width:22px;height:4px;background:#fff;z-index:5"></div>
<div class="r" style="left:115px;top:500px;width:760px;height:3.6px;background:#f0f0f0;z-index:6"></div>
<div class="r" style="left:115px;top:500px;width:570px;height:3.6px;background:#cbcbcb;z-index:7"></div>
<div class="r" style="left:877px;top:128px;width:19.5px;height:376px;background:#f3f3f3;"></div>
<svg style="left:882px;top:132px" width="6" height="9" viewBox="0 0 6 9"><path d="M5 0.8 L1.2 4.5 L5 8.2" fill="none" stroke="#888" stroke-width="0.8"/></svg>
<svg style="left:881px;top:150px" width="12" height="106" viewBox="0 0 12 106"><g fill="none" stroke="#999" stroke-width="0.75"><path d="M2 2.5 H6 L8.5 5 V10 H2 Z"/><circle cx="7.5" cy="8.5" r="1.5"/><circle cx="6" cy="18.5" r="1.4"/><path d="M6 20 V25 M2.5 25.5 L6 21.5 L9.5 25.5"/><circle cx="6" cy="35" r="1.3"/><circle cx="3.5" cy="40" r="1.3"/><circle cx="8.5" cy="40" r="1.3"/><path d="M2.5 51 Q6 48 9.5 51 V56 H2.5 Z"/><path d="M4 53.5 H8"/><circle cx="6" cy="70" r="1.1"/><path d="M2 66.5 L6 70 L10 67 M2.5 73.5 L6 70 L9.5 73.5"/><path d="M3 82 H9 V89 H3 Z M4.5 81 V83 M7.5 88 V90"/><path d="M2 97 H10 M2 100 H10 M2 103 H10 M7 95.5 V98.5 M4.5 98.5 V101.5 M7.5 101.5 V104.5"/></g></svg>
<div class="r" style="left:115.8px;top:141px;width:756.5px;height:37px;border:1.5px solid #ef4a4e;border-radius:5px;z-index:20"></div>
<div class="r" style="left:304px;top:149.7px;width:76px;height:84.6px;background:#fff;box-shadow:0.5px 0.8px 2px rgba(0,0,0,0.28);z-index:10"></div>
<div class="t s" style="left:306px;top:152.47px;font-size:5.9px;line-height:7.67px;color:#333;font-weight:normal;letter-spacing:-0.035px;z-index:11">&#8226; ow Side-by-Side</div>
<div class="t s" style="left:306px;top:162.47px;font-size:5.9px;line-height:7.67px;color:#bbb;font-weight:normal;letter-spacing:-0.131px;z-index:11">Compare Job Descriptions</div>
<div class="t s" style="left:306px;top:173.66px;font-size:5.9px;line-height:7.67px;color:#333;font-weight:normal;letter-spacing:-0.166px;z-index:11">Reapply Master Template</div>
<div class="t s" style="left:306px;top:183.87px;font-size:5.9px;line-height:7.67px;color:#333;font-weight:normal;letter-spacing:-0.161px;z-index:11">Job Template Editor</div>
<div class="t s" style="left:306px;top:194.26px;font-size:5.9px;line-height:7.67px;color:#333;font-weight:normal;letter-spacing:-0.181px;z-index:11">Refresh Translations</div>
<div class="t s" style="left:306px;top:204.47px;font-size:5.9px;line-height:7.67px;color:#333;font-weight:normal;letter-spacing:-0.132px;z-index:11">Delete Job Descriptions</div>
<div class="t s" style="left:306px;top:214.76px;font-size:5.9px;line-height:7.67px;color:#333;font-weight:normal;letter-spacing:-0.191px;z-index:11">Share Selected Jobs</div>
<div class="t s" style="left:306px;top:224.97px;font-size:5.9px;line-height:7.67px;color:#333;font-weight:normal;letter-spacing:-0.366px;z-index:11">Mass Cascade</div>
<div class="r" style="left:302px;top:181px;width:77.3px;height:11.6px;border:1.4px solid #ef4a4e;border-radius:2.5px;z-index:21"></div>
</body></html>
